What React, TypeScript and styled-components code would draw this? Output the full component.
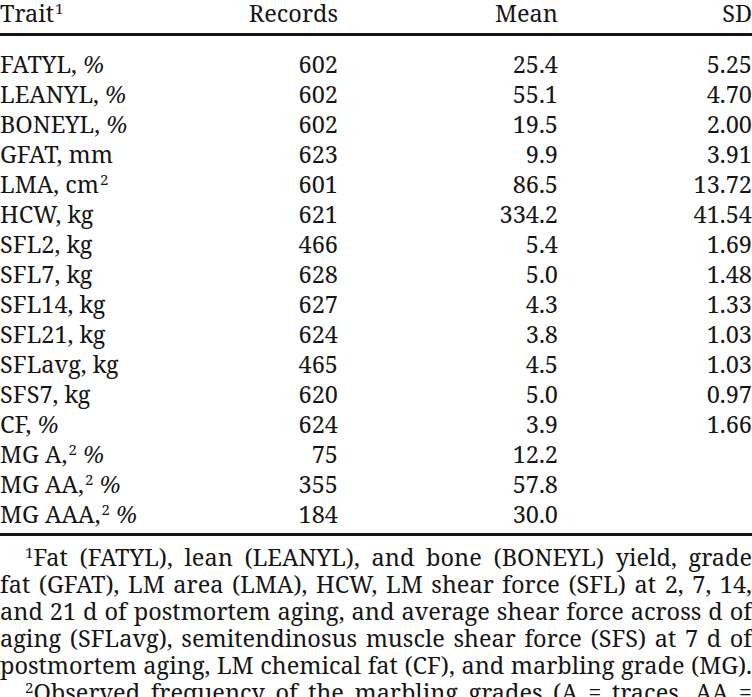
import React from "react";
import styled, { createGlobalStyle } from "styled-components";

const Global = createGlobalStyle`
  html, body { margin: 0; padding: 0; background: #ffffff; }
  body { overflow: hidden; }
`;

const Page = styled.div`
  width: 752px;
  height: 697px;
  overflow: hidden;
  background: #fff;
  font-family: 'Noto Serif', 'Liberation Serif', serif;
  color: #151515;
  font-size: 23.5px;
`;

const Grid = styled.div`
  display: grid;
  grid-template-columns: 200px 138px 220px 194px;
`;

const Header = styled(Grid)`
  line-height: 26px;
  padding-bottom: 7px;
  border-bottom: 3px solid #151515;
`;

const Body = styled.div`
  padding: 13px 0 4px;
  border-bottom: 3px solid #151515;
`;

const Row = styled(Grid)`
  line-height: 30px;
  height: 30px;
`;

const Cell = styled.div<{ $align?: "left" | "right" }>`
  text-align: ${(p) => p.$align ?? "right"};
  white-space: nowrap;
`;

const Sup = styled.sup`
  font-size: 0.64em;
  line-height: 0;
  vertical-align: 0;
  position: relative;
  top: -0.55em;
  margin-left: 1px;
`;

const Pct = styled.span`
  font-style: italic;
`;

const Notes = styled.div`
  margin-top: 8px;
  line-height: 27px;
`;

const Line = styled.div<{ $indent?: boolean; $last?: boolean }>`
  text-align: justify;
  text-align-last: ${(p) => (p.$last ? "left" : "justify")};
  padding-left: ${(p) => (p.$indent ? "24px" : "0")};
  white-space: nowrap;
  height: 27px;
`;

type R = { trait: React.ReactNode; n: string; mean: string; sd: string };

const rows: R[] = [
  { trait: <>FATYL, <Pct>%</Pct></>, n: "602", mean: "25.4", sd: "5.25" },
  { trait: <>LEANYL, <Pct>%</Pct></>, n: "602", mean: "55.1", sd: "4.70" },
  { trait: <>BONEYL, <Pct>%</Pct></>, n: "602", mean: "19.5", sd: "2.00" },
  { trait: <>GFAT, mm</>, n: "623", mean: "9.9", sd: "3.91" },
  { trait: <>LMA, cm<Sup>2</Sup></>, n: "601", mean: "86.5", sd: "13.72" },
  { trait: <>HCW, kg</>, n: "621", mean: "334.2", sd: "41.54" },
  { trait: <>SFL2, kg</>, n: "466", mean: "5.4", sd: "1.69" },
  { trait: <>SFL7, kg</>, n: "628", mean: "5.0", sd: "1.48" },
  { trait: <>SFL14, kg</>, n: "627", mean: "4.3", sd: "1.33" },
  { trait: <>SFL21, kg</>, n: "624", mean: "3.8", sd: "1.03" },
  { trait: <>SFLavg, kg</>, n: "465", mean: "4.5", sd: "1.03" },
  { trait: <>SFS7, kg</>, n: "620", mean: "5.0", sd: "0.97" },
  { trait: <>CF, <Pct>%</Pct></>, n: "624", mean: "3.9", sd: "1.66" },
  { trait: <>MG A,<Sup>2</Sup> <Pct>%</Pct></>, n: "75", mean: "12.2", sd: "" },
  { trait: <>MG AA,<Sup>2</Sup> <Pct>%</Pct></>, n: "355", mean: "57.8", sd: "" },
  { trait: <>MG AAA,<Sup>2</Sup> <Pct>%</Pct></>, n: "184", mean: "30.0", sd: "" },
];

export default function App() {
  return (
    <Page>
      <Global />
      <Header>
        <Cell $align="left">
          Trait<Sup>1</Sup>
        </Cell>
        <Cell>Records</Cell>
        <Cell>Mean</Cell>
        <Cell>SD</Cell>
      </Header>
      <Body>
        {rows.map((r, i) => (
          <Row key={i}>
            <Cell $align="left">{r.trait}</Cell>
            <Cell>{r.n}</Cell>
            <Cell>{r.mean}</Cell>
            <Cell>{r.sd}</Cell>
          </Row>
        ))}
      </Body>
      <Notes>
        <Line $indent>
          <Sup>1</Sup>Fat (FATYL), lean (LEANYL), and bone (BONEYL) yield, grade
        </Line>
        <Line>fat (GFAT), LM area (LMA), HCW, LM shear force (SFL) at 2, 7, 14,</Line>
        <Line>and 21 d of postmortem aging, and average shear force across d of</Line>
        <Line>aging (SFLavg), semitendinosus muscle shear force (SFS) at 7 d of</Line>
        <Line>postmortem aging, LM chemical fat (CF), and marbling grade (MG).</Line>
        <Line $indent>
          <Sup>2</Sup>Observed frequency of the marbling grades (A = traces, AA =
        </Line>
        <Line $last>slight, AAA = small).</Line>
      </Notes>
    </Page>
  );
}
